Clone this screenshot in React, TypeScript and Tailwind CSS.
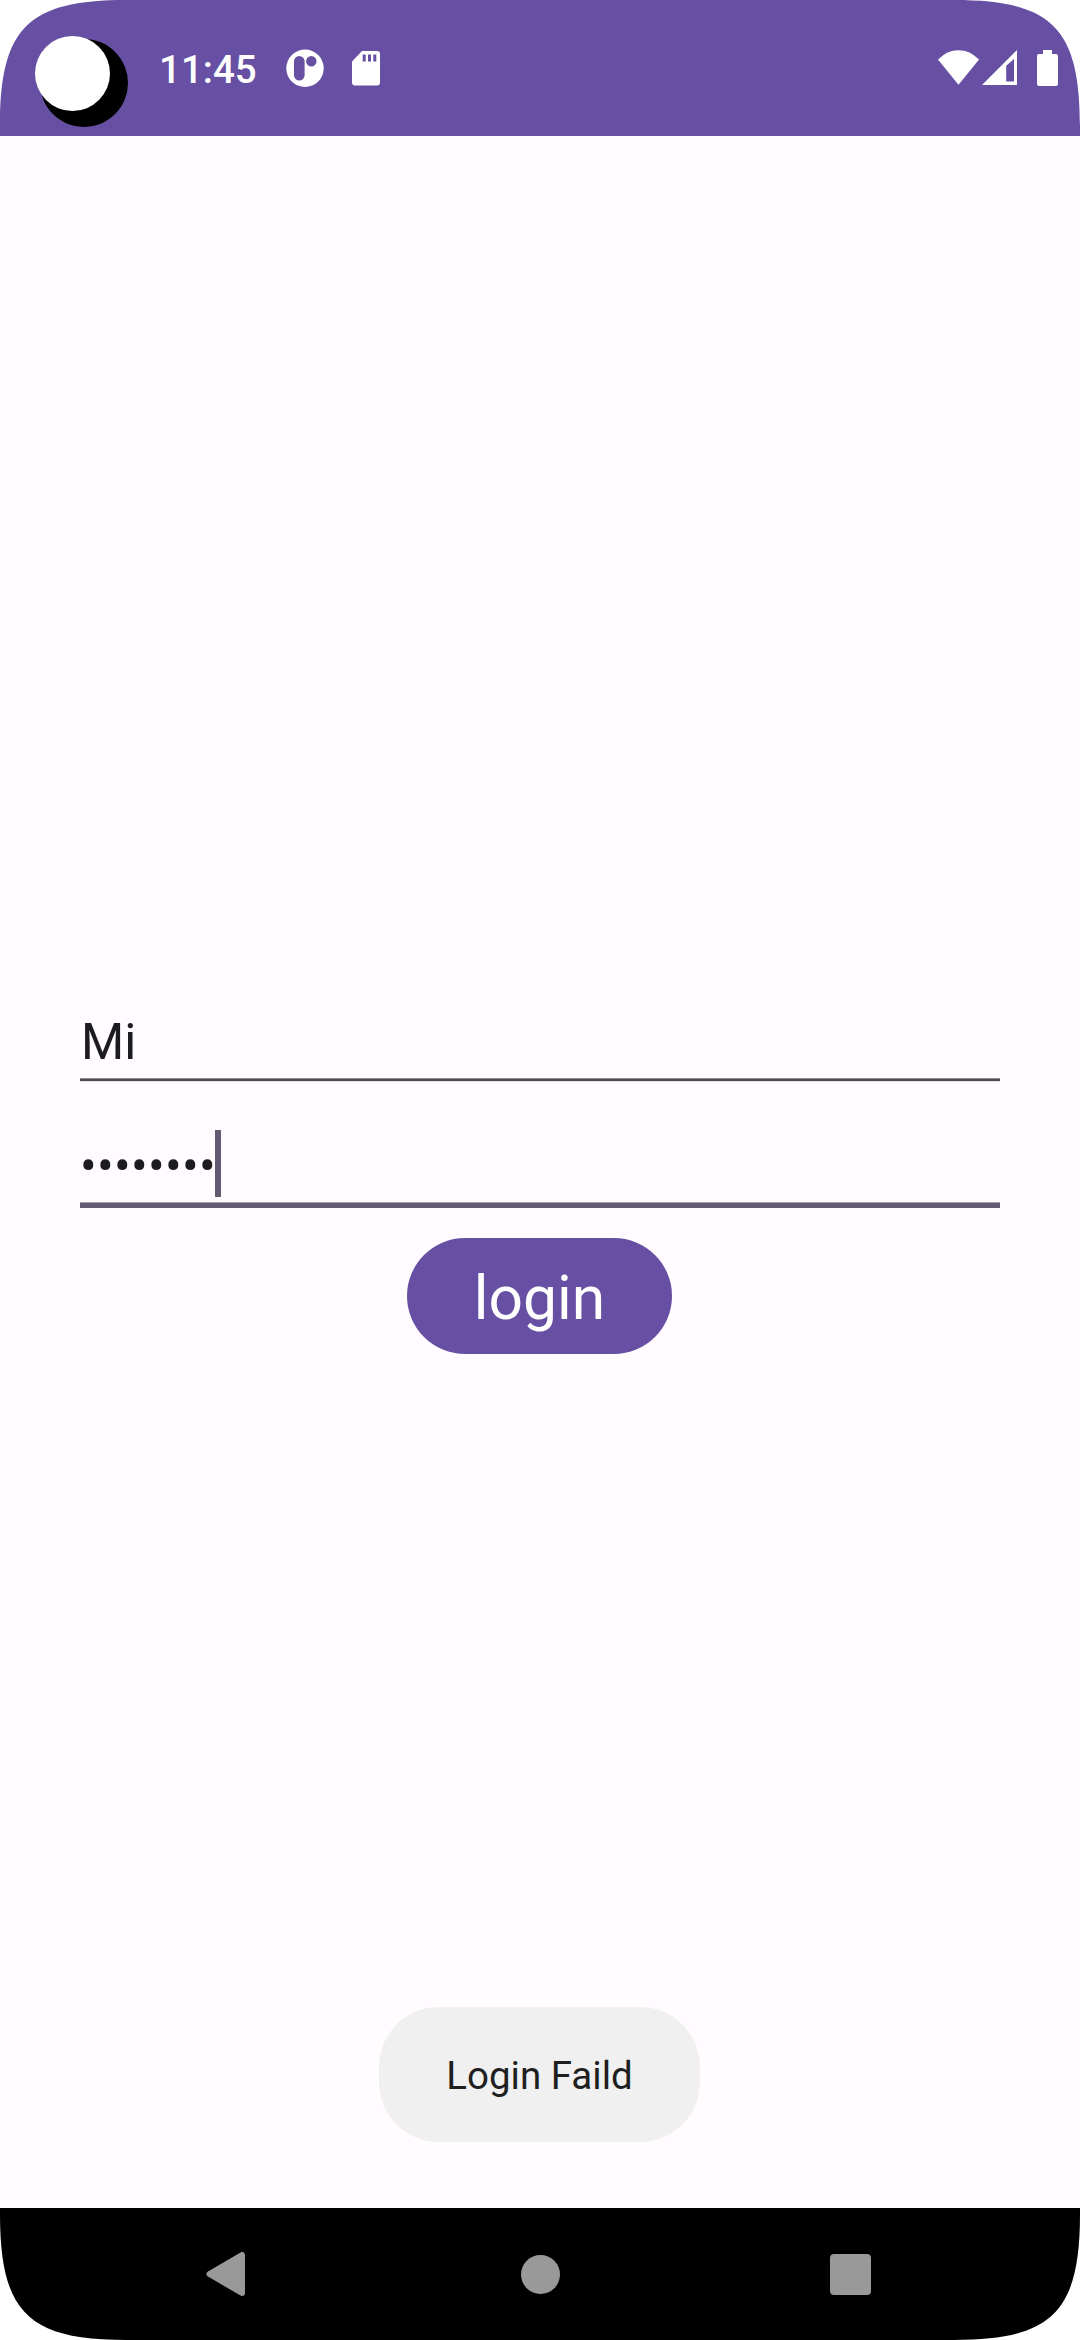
const CORNERS = [
  'left-0 top-0',
  'right-0 top-0 -scale-x-100',
  'left-0 bottom-0 -scale-y-100',
  'right-0 bottom-0 -scale-100',
];

function ScreenCorner({ place }: { place: string }) {
  return (
    <svg className={`pointer-events-none absolute size-[130px] ${place}`} viewBox="0 0 130 130">
      <path d="M0 0H126C28 0 0 28 0 126Z" fill="#fff" />
    </svg>
  );
}

function StatusBar() {
  return (
    <header className="flex h-[136px] shrink-0 items-start bg-[#6750a3] text-white">
      <svg className="ml-[35px] mt-9 h-[91px] w-[93px]" viewBox="35 36 93 91">
        <circle cx="84" cy="83" r="44" fill="#000" />
        <circle cx="72.5" cy="73.5" r="37.5" fill="#fff" />
      </svg>
      <span className="ml-[31px] mt-[47px] w-[98px] whitespace-nowrap text-[38.5px] font-medium leading-[46px]">
        11:45
      </span>
      <svg className="ml-[29px] mt-[49px] size-[38px]" viewBox="0 0 38 38">
        <circle cx="19" cy="19.3" r="18.7" fill="#fff" />
        <rect x="8" y="7" width="10.6" height="24.6" rx="5.3" fill="#6750a3" />
        <circle cx="25.3" cy="12.3" r="5.2" fill="#6750a3" />
      </svg>
      <svg className="ml-[28px] mt-[51px] h-[35px] w-[28px]" viewBox="0 0 28 35">
        <path d="M10 0H25a3 3 0 0 1 3 3V31.600a3 3 0 0 1-3 3H3a3 3 0 0 1-3-3V10.500Z" fill="#fff" />
        <path d="M10.700 3.600h3v7h-3ZM16 3.600h3v7h-3ZM21.300 3.600h3v7h-3Z" fill="#6750a3" />
      </svg>
      <div className="ml-auto mr-[22px] mt-[50px] flex items-start">
        <svg className="h-[35px] w-[41px]" viewBox="0 0 41 35">
          <path d="M0 9.500Q9 .2 20.500 .2T41 9.500L20.500 34.700Z" fill="#fff" />
        </svg>
        <svg className="ml-[3px] h-[35px] w-[35px]" viewBox="0 0 35 35">
          <path fillRule="evenodd" d="M35 0V35H0ZM32 9L24.200 15.800V31.500H32Z" fill="#fff" />
        </svg>
        <svg className="ml-[20px] h-[36px] w-[21px]" viewBox="0 0 21 36">
          <path d="M6 0H15V4H19a2 2 0 0 1 2 2V34a2 2 0 0 1-2 2H2a2 2 0 0 1-2-2V6a2 2 0 0 1 2-2H6Z" fill="#fff" />
        </svg>
      </div>
    </header>
  );
}

function LoginForm() {
  return (
    <main className="flex min-h-0 flex-1 flex-col items-center px-20 pt-[876px]">
      <div className="flex h-[69px] w-full items-start border-b-2 border-[#4d4953] pl-px pt-px text-[49.5px] leading-[58px] text-[#1c1b1f] shadow-[inset_0_-1px_#8f8b94,0_1px_#e5e1e6]">
        Mi
      </div>
      <div className="mt-[49px] flex h-[78px] w-full items-start border-b-[5px] border-[#625b71] text-[49.5px] text-[#1c1b1f] shadow-[inset_0_-1px_#a39daa]">
        <span className="w-[135px] whitespace-nowrap pt-[3px] leading-[67px] tracking-[.3px]">••••••••</span>
        <span className="h-[67px] w-1.5 bg-[#625b71]" />
      </div>
      <button className="mr-px mt-[30px] h-[116px] w-[265px] rounded-full bg-[#6750a3] pt-1.5 text-[60.5px] leading-none text-white">
        login
      </button>
      <div className="mb-[66px] mr-px mt-auto flex h-[135px] w-[321px] items-center justify-center rounded-[60px] bg-[#f0f0f0] pt-1 text-[38.5px] leading-none text-[#1f1f1f]">
        Login Faild
      </div>
    </main>
  );
}

function NavigationBar() {
  return (
    <nav className="flex h-[132px] shrink-0 items-center bg-black pl-[206px] pr-[209px]">
      <svg className="h-[46px] w-[40px]" viewBox="0 0 40 46">
        <path d="M3.500 23 36 4V42Z" fill="#999" stroke="#999" strokeWidth="6" strokeLinejoin="round" />
      </svg>
      <span className="ml-[275px] size-[39px] rounded-full bg-[#999]" />
      <span className="ml-[270px] size-[41px] rounded-[4px] bg-[#999]" />
    </nav>
  );
}

export default function App() {
  return (
    <div className="relative flex h-[2340px] w-[1080px] flex-col overflow-hidden bg-[#fffbfe] font-[Roboto,sans-serif]">
      <StatusBar />
      <LoginForm />
      <NavigationBar />
      {CORNERS.map((place) => (
        <ScreenCorner key={place} place={place} />
      ))}
    </div>
  );
}
